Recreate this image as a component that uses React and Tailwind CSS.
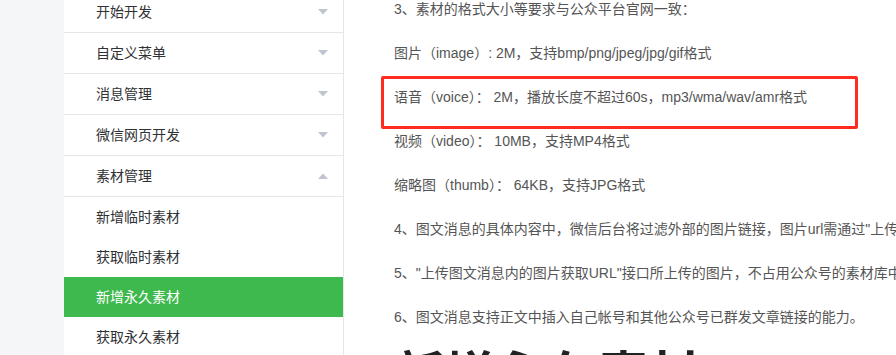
import React from 'react';

const menus = ['开始开发', '自定义菜单', '消息管理', '微信网页开发'];
const subItems = ['新增临时素材', '获取临时素材', '新增永久素材', '获取永久素材'];

const paragraphs = [
  '3、素材的格式大小等要求与公众平台官网一致：',
  '图片（image）: 2M，支持bmp/png/jpeg/jpg/gif格式',
  '语音（voice）： 2M，播放长度不超过60s，mp3/wma/wav/amr格式',
  '视频（video）： 10MB，支持MP4格式',
  '缩略图（thumb）： 64KB，支持JPG格式',
  '4、图文消息的具体内容中，微信后台将过滤外部的图片链接，图片url需通过"上传图文消息内的图片获取URL"接口上传图片获取。',
  '5、"上传图文消息内的图片获取URL"接口所上传的图片，不占用公众号的素材库中图片数量的5000个的限制，图片仅支持jpg/png格式，大小必须在1MB以下。',
  '6、图文消息支持正文中插入自己帐号和其他公众号已群发文章链接的能力。',
];

const Arrow = ({ up }) => (
  <svg width="10" height="6" viewBox="0 0 10 6" className="shrink-0">
    {up ? (
      <path d="M5 0.5 L10 6 L0 6 Z" fill="#c0c4cc" />
    ) : (
      <path d="M0 0 L10 0 L5 5.5 Z" fill="#c0c4cc" />
    )}
  </svg>
);

const App = () => {
  return (
    <div
      className="w-[896px] h-[355px] overflow-hidden flex bg-[#f5f6f8]"
      style={{ fontFamily: '"Liberation Sans", "Noto Sans CJK SC", sans-serif' }}
    >
      {/* left gutter */}
      <div className="w-16 shrink-0" />

      {/* sidebar */}
      <div className="w-[280px] shrink-0 bg-white border-r border-[#e6e6e6]">
        <div className="-mt-[8px]">
          {menus.map((m) => (
            <div
              key={m}
              className="h-[41px] border-b border-[#e6e6e6] flex items-center justify-between pl-8 pr-[15px] text-[14px] text-[#303133]"
            >
              <span>{m}</span>
              <Arrow />
            </div>
          ))}
          <div className="h-[41px] border-b border-[#e6e6e6] flex items-center justify-between pl-8 pr-[15px] text-[14px] text-[#303133]">
            <span>素材管理</span>
            <Arrow up />
          </div>
          {subItems.map((s) => (
            <div
              key={s}
              className={
                s === '新增永久素材'
                  ? 'h-10 flex items-center pl-8 text-[14px] bg-[#3eb94e] text-white'
                  : 'h-10 flex items-center pl-8 text-[14px] text-[#303133]'
              }
            >
              {s}
            </div>
          ))}
        </div>
      </div>

      {/* content */}
      <div className="flex-1 bg-white relative overflow-hidden">
        <div className="pl-[50px] -mt-[3px] flex flex-col gap-5 text-[14px] leading-[24px] text-[#555]">
          {paragraphs.map((p, i) => (
            <p key={i} className="whitespace-nowrap">{p}</p>
          ))}
          <h2 className="-mt-[2px] text-[51px] font-bold leading-[60px] text-[#222] whitespace-nowrap">
            新增永久素材
          </h2>
        </div>

        {/* red annotation box */}
        <div className="absolute left-[37px] top-[76px] w-[477px] h-[53px] border-[3px] border-[#fe2b1f] rounded-[2px]" />
      </div>
    </div>
  );
};

export default App;
